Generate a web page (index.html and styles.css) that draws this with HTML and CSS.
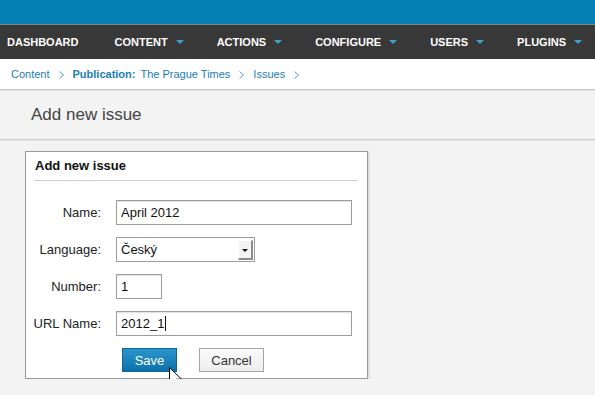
FILE: index.html
```html
<!DOCTYPE html>
<html lang="en">
  <head>
    <meta charset="UTF-8" />
    <title>Add new issue</title>
    <link rel="stylesheet" href="styles.css">
  </head>
  <body>
    <div class="topbar"></div>

    <ul class="nav">
      <li class="nav-item first">Dashboard</li>
      <li class="nav-item">Content <span class="caret"></span></li>
      <li class="nav-item">Actions <span class="caret"></span></li>
      <li class="nav-item">Configure <span class="caret"></span></li>
      <li class="nav-item">Users <span class="caret"></span></li>
      <li class="nav-item">Plugins <span class="caret"></span></li>
    </ul>

    <div class="breadcrumbs">
      <a href="#">Content</a>
      <svg class="sep" width="5" height="8" viewBox="0 0 5 8"><polyline points="0.5,0.5 4.5,4 0.5,7.5" /></svg>
      <span class="crumb-label">Publication:</span>
      <a href="#">The Prague Times</a>
      <svg class="sep" width="5" height="8" viewBox="0 0 5 8"><polyline points="0.5,0.5 4.5,4 0.5,7.5" /></svg>
      <a href="#">Issues</a>
      <svg class="sep" width="5" height="8" viewBox="0 0 5 8"><polyline points="0.5,0.5 4.5,4 0.5,7.5" /></svg>
    </div>

    <div class="page-header">
      <h1>Add new issue</h1>
    </div>

    <div class="content">
      <div class="box">
        <h2>Add new issue</h2>
        <form class="issue-form">
          <label>Name:</label>
          <input type="text" class="field wide" value="April 2012" />

          <label>Language:</label>
          <div class="select">
            <span class="select-value">Český</span>
            <span class="select-btn"><span class="select-arrow"></span></span>
          </div>

          <label>Number:</label>
          <input type="text" class="field small" value="1" />

          <label>URL Name:</label>
          <div class="field wide field-text">2012_1<span class="text-caret"></span></div>

          <span></span>
          <div class="actions">
            <button type="button" class="btn-save">Save</button>
            <button type="button" class="btn-cancel">Cancel</button>
            <svg class="pointer" width="14" height="21" viewBox="0 0 14 21">
              <path d="M0.5,0.5 L0.5,17 L4.5,13 L7.3,19.8 L9.8,18.8 L7,12.2 L12.5,12.2 Z" />
            </svg>
          </div>
        </form>
      </div>
    </div>
  </body>
</html>
```

FILE: styles.css
```css
body {
  font-family: "Liberation Sans", Arial, sans-serif;
  background-color: #f3f3f3;
  margin: 0;
  color: #222;
}

.topbar {
  height: 24px;
  background-color: #0580b4;
  border-bottom: 1px solid #858585;
}

.nav {
  display: flex;
  gap: 33px;
  margin: 0;
  padding: 0 0 0 7px;
  height: 34px;
  align-items: center;
  list-style: none;
  background-color: #383838;
}

.nav-item {
  color: #fff;
  font-size: 11px;
  font-weight: bold;
  text-transform: uppercase;
  display: flex;
  align-items: center;
}

.nav-item.first {
  margin-right: 3px;
}

.caret {
  display: inline-block;
  margin-left: 8px;
  width: 0;
  height: 0;
  border-left: 4px solid transparent;
  border-right: 4px solid transparent;
  border-top: 4px solid #3a9fd2;
}

.breadcrumbs {
  height: 30px;
  background: #fff;
  border-bottom: 1px solid #c8c8c8;
  box-shadow: 0 1px 1px rgba(0, 0, 0, 0.06);
  display: flex;
  align-items: center;
  padding-left: 11px;
  font-size: 11px;
}

.breadcrumbs a {
  color: #1b7db4;
  text-decoration: none;
}

.crumb-label {
  color: #1b7db4;
  font-weight: bold;
  margin-right: 5px;
}

.sep {
  margin: 2px 9px 0;
}

.sep polyline {
  fill: none;
  stroke: #5a9ec6;
  stroke-width: 1;
}

.page-header {
  height: 49px;
  border-bottom: 1px solid #cfcfcf;
  box-shadow: 0 1px 1px rgba(0, 0, 0, 0.05);
  display: flex;
  align-items: center;
  padding-left: 31px;
}

h1 {
  margin: 0;
  font-size: 17px;
  font-weight: normal;
  color: #444;
}

.content {
  padding: 11px 0 0 25px;
}

.box {
  width: 343px;
  background: #fff;
  border: 1px solid #9a9a9a;
  box-shadow: 1px 1px 2px rgba(0, 0, 0, 0.15);
  padding: 0 9px 6px 8px;
  box-sizing: border-box;
}

h2 {
  margin: 0;
  font-size: 13px;
  line-height: 16px;
  padding: 6px 0 6px 1px;
  border-bottom: 1px solid #cccccc;
  color: #111;
}

.issue-form {
  display: grid;
  grid-template-columns: 72px auto;
  column-gap: 15px;
  row-gap: 12px;
  align-items: center;
  margin: 19px 0 0 -5px;
  font-size: 13px;
}

.issue-form label {
  text-align: right;
  white-space: nowrap;
  color: #222;
}

.field {
  height: 25px;
  box-sizing: border-box;
  border: 1px solid #9d9d9d;
  box-shadow: inset 0 1px 1px rgba(0, 0, 0, 0.12);
  padding: 0 4px;
  font-family: "Liberation Sans", Arial, sans-serif;
  font-size: 13px;
  color: #111;
  margin: 0;
  background: #fff;
}

.field-text {
  display: flex;
  align-items: center;
}

.text-caret {
  display: inline-block;
  width: 1px;
  height: 15px;
  margin-left: 1px;
  background: #111;
}

.field.wide {
  width: 236px;
}

.field.small {
  width: 46px;
}

.select {
  width: 139px;
  height: 25px;
  box-sizing: border-box;
  border: 1px solid #9d9d9d;
  display: flex;
  align-items: center;
  justify-content: space-between;
  padding: 0 1px 0 4px;
  color: #111;
}

.select-btn {
  width: 15px;
  height: 20px;
  box-sizing: border-box;
  background: #f4f4f4;
  border-top: 1px solid #fff;
  border-left: 1px solid #fff;
  border-right: 2px solid #8c8c8c;
  border-bottom: 2px solid #8c8c8c;
  display: flex;
  align-items: center;
  justify-content: center;
}

.select-arrow {
  width: 0;
  height: 0;
  border-left: 3px solid transparent;
  border-right: 3px solid transparent;
  border-top: 3px solid #111;
  margin-top: 2px;
}

.actions {
  position: relative;
  display: flex;
  gap: 22px;
  padding-left: 6px;
}

.actions button {
  height: 24px;
  font-family: "Liberation Sans", Arial, sans-serif;
  font-size: 13px;
  cursor: pointer;
}

.btn-save {
  width: 55px;
  color: #fff;
  border: 1px solid #0c6594;
  background: linear-gradient(#2a95cd, #0b72a9);
}

.btn-cancel {
  width: 65px;
  color: #333;
  border: 1px solid #a5a5a5;
  background: linear-gradient(#fafafa, #eeeeee);
}

.pointer {
  position: absolute;
  left: 53px;
  top: 19px;
}

.pointer path {
  fill: #fff;
  stroke: #000;
  stroke-width: 1;
}
```
